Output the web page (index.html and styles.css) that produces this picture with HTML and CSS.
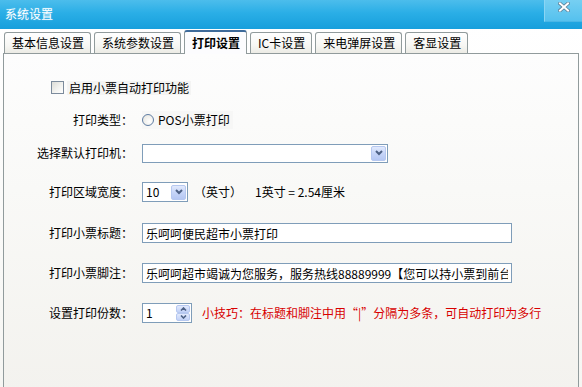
FILE: index.html
```html
<!DOCTYPE html>
<html lang="zh-CN">
<head>
<meta charset="utf-8">
<title>系统设置</title>
<link rel="stylesheet" href="styles.css">
</head>
<body>
<div class="window">
  <div class="titlebar">
    <span class="title">系统设置</span>
    <div class="close">
      <svg width="12" height="10" viewBox="0 0 12 10">
        <path d="M2 1.5 L10 8.5 M10 1.5 L2 8.5" stroke="#5d7f96" stroke-width="3.6" stroke-linecap="square"/>
        <path d="M2 1.5 L10 8.5 M10 1.5 L2 8.5" stroke="#ffffff" stroke-width="2" stroke-linecap="square"/>
      </svg>
    </div>
  </div>
  <div class="tabstrip">
    <div class="tab">基本信息设置</div>
    <div class="tab">系统参数设置</div>
    <div class="tab active">打印设置</div>
    <div class="tab">IC卡设置</div>
    <div class="tab">来电弹屏设置</div>
    <div class="tab">客显设置</div>
  </div>
  <div class="panel">
    <div class="row row-check">
      <span class="checkbox"></span>
      <span class="check-label">启用小票自动打印功能</span>
    </div>
    <div class="row row-type">
      <span class="label">打印类型：</span>
      <span class="radio-wrap"><span class="radio"></span><span class="radio-label">POS小票打印</span></span>
    </div>
    <div class="row row-printer">
      <span class="label">选择默认打印机：</span>
      <div class="select select-wide">
        <span class="select-text"></span>
        <span class="drop-btn"><svg width="8" height="6" viewBox="0 0 8 6"><path d="M1 1 L4 4 L7 1" fill="none" stroke="#4d6185" stroke-width="2"/></svg></span>
      </div>
    </div>
    <div class="row row-width">
      <span class="label">打印区域宽度：</span>
      <div class="select select-small">
        <span class="select-text">10</span>
        <span class="drop-btn"><svg width="8" height="6" viewBox="0 0 8 6"><path d="M1 1 L4 4 L7 1" fill="none" stroke="#4d6185" stroke-width="2"/></svg></span>
      </div>
      <span class="unit">（英寸）</span>
      <span class="conv">1英寸 = 2.54厘米</span>
    </div>
    <div class="row row-title">
      <span class="label">打印小票标题：</span>
      <input class="text-input" type="text" value="乐呵呵便民超市小票打印">
    </div>
    <div class="row row-foot">
      <span class="label">打印小票脚注：</span>
      <input class="text-input" type="text" value="乐呵呵超市竭诚为您服务，服务热线88889999【您可以持小票到前台兑换积分】">
    </div>
    <div class="row row-copies">
      <span class="label">设置打印份数：</span>
      <div class="spinner">
        <span class="spin-text">1</span>
        <span class="spin-btns">
          <span class="spin-btn"><svg width="7" height="4" viewBox="0 0 7 4"><path d="M1 3.5 L3.5 1 L6 3.5" fill="none" stroke="#4d6185" stroke-width="1.6"/></svg></span>
          <span class="spin-btn"><svg width="7" height="4" viewBox="0 0 7 4"><path d="M1 0.5 L3.5 3 L6 0.5" fill="none" stroke="#4d6185" stroke-width="1.6"/></svg></span>
        </span>
      </div>
      <span class="tip">小技巧：在标题和脚注中用“|”分隔为多条，可自动打印为多行</span>
    </div>
  </div>
</div>
</body>
</html>
```
FILE: styles.css
```css
* {
  box-sizing: border-box;
}
html, body {
  margin: 0;
  padding: 0;
}
body {
  font-family: "Noto Sans CJK SC", "Liberation Sans", sans-serif;
  font-size: 12px;
  color: #000;
  background: #f4f3ef;
}
.window {
  width: 582px;
  height: 387px;
  overflow: hidden;
  display: flex;
  flex-direction: column;
  background: linear-gradient(to bottom, #c4e6f6 0px, #e6f4fb 14px, #ffffff 24px, #f6f6f3 100%);
}
.titlebar {
  height: 29px;
  flex: none;
  display: flex;
  justify-content: space-between;
  align-items: flex-start;
  background: linear-gradient(to bottom, #4cbdec 0%, #2aaee6 45%, #179fdc 100%);
}
.title {
  color: #fff;
  line-height: 14px;
  padding-top: 7px;
  padding-left: 5px;
  text-shadow: 0 0 2px rgba(255,255,255,0.35);
}
.close {
  width: 38px;
  height: 22px;
  display: flex;
  justify-content: center;
  align-items: flex-start;
  padding-top: 2px;
  background: linear-gradient(to bottom, #76cff2, #55c1ee);
  border-left: 1px solid #8ad5f4;
  border-bottom: 1px solid #49b6e6;
}
.tabstrip {
  height: 24px;
  flex: none;
  display: flex;
  align-items: flex-end;
  gap: 3px;
  padding-left: 4px;
}
.tab {
  height: 21px;
  padding: 0 6px 0 7px;
  display: flex;
  align-items: center;
  line-height: 14px;
  border: 1px solid #919b9c;
  border-bottom: none;
  border-radius: 3px 3px 0 0;
  background: linear-gradient(to bottom, #ffffff, #f7f7f4 60%, #ecebe5);
  white-space: nowrap;
}
.tab.active {
  height: 24px;
  margin-bottom: -1px;
  position: relative;
  z-index: 1;
  font-weight: bold;
  border-top: 2px solid #3d6a9a;
  background: #fcfcfe;
  padding-bottom: 1px;
}
.panel {
  height: 340px;
  flex: none;
  margin: 0 3px;
  border: 1px solid #919b9c;
  background: linear-gradient(to bottom, #fdfdfd, #f9f9f7 40%, #f3f2ee);
  display: flex;
  flex-direction: column;
}
.row {
  display: flex;
  align-items: center;
  height: 20px;
  white-space: nowrap;
  line-height: 14px;
}
.row-check {
  height: 13px;
  margin-top: 27px;
  padding-left: 47px;
}
.row-type { margin-top: 16px; }
.row-printer { margin-top: 13px; }
.row-width { margin-top: 19px; }
.row-title { margin-top: 21px; }
.row-foot { margin-top: 20px; }
.row-copies { margin-top: 20px; }

.checkbox {
  width: 13px;
  height: 13px;
  border: 1px solid #7c8b9c;
  background: linear-gradient(135deg, #dcdcd6, #f4f4f1 60%, #ffffff);
  flex: none;
}
.check-label {
  margin-left: 3px;
  padding: 0 2px;
  background: #f4f4f3;
}
.label {
  width: 129px;
  text-align: right;
  margin-right: 9px;
  flex: none;
}
.radio-wrap {
  display: flex;
  align-items: center;
  padding: 2px 3px 2px 0;
  background: #f7f7f6;
}
.radio {
  width: 12px;
  height: 12px;
  border-radius: 50%;
  border: 1px solid #5f7da3;
  background: radial-gradient(circle at 65% 65%, #ffffff, #ecebe6 70%, #d6d5cf);
  flex: none;
}
.radio-label {
  margin-left: 4px;
}
.select {
  height: 19px;
  border: 1px solid #7f9db9;
  background: #fff;
  display: flex;
  align-items: center;
  justify-content: space-between;
  padding: 0 1px 0 3px;
  flex: none;
}
.select-wide {
  width: 246px;
}
.select-small {
  width: 46px;
  height: 20px;
}
.drop-btn {
  width: 15px;
  height: 15px;
  border: 1px solid #b6c8f0;
  border-radius: 2px;
  background: linear-gradient(to bottom, #e2eafd, #c6d5f8 50%, #b5c7f3);
  display: flex;
  align-items: center;
  justify-content: center;
}
.unit {
  margin-left: 6px;
}
.conv {
  margin-left: 13px;
}
.text-input {
  width: 370px;
  height: 20px;
  border: 1px solid #7f9db9;
  background: #fff;
  padding: 0 3px;
  margin: 0;
  font: inherit;
  font-size: 12px;
  color: #000;
  outline: none;
}
.spinner {
  width: 50px;
  height: 20px;
  border: 1px solid #7f9db9;
  background: #fff;
  display: flex;
  align-items: center;
  justify-content: space-between;
  padding: 0 1px 0 3px;
  flex: none;
}
.spin-btns {
  display: flex;
  flex-direction: column;
  gap: 0;
}
.spin-btn {
  width: 14px;
  height: 8px;
  border: 1px solid #b6c8f0;
  border-radius: 2px;
  background: linear-gradient(to bottom, #e2eafd, #c1d1f7);
  display: flex;
  align-items: center;
  justify-content: center;
}
.tip {
  margin-left: 10px;
  color: #d80000;
}
```
